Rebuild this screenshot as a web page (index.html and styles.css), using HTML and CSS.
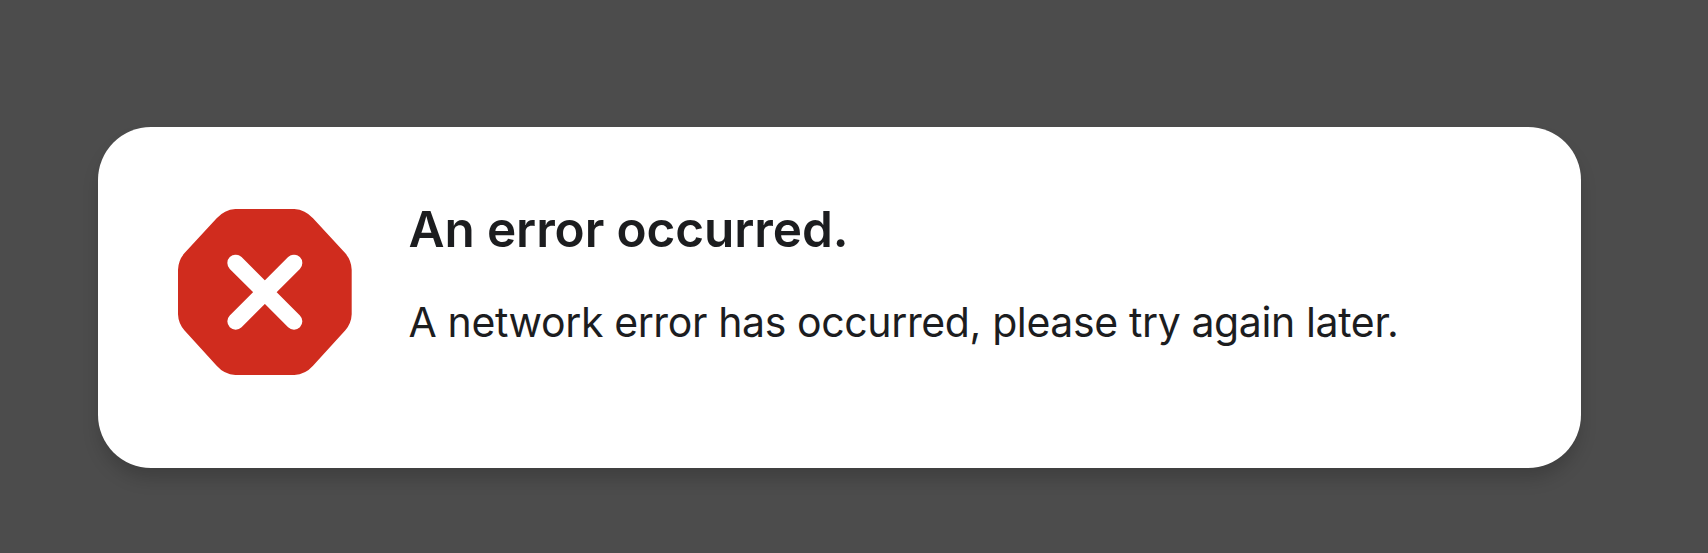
FILE: index.html
```
<!DOCTYPE html>
<html lang="en">
<head>
    <meta charset="UTF-8">
    <title>Error</title>
    <meta name="viewport" content="width=device-width, initial-scale=1">
    <link rel="stylesheet" href="styles.css">
</head>
<body>
    <div class="alert" role="alert">
        <svg class="alert-icon" viewBox="0 0 521 498" preserveAspectRatio="none" aria-hidden="true">
            <path fill="#d02c1e" d="M172 0H349Q382 2 405 28L502 133Q520 154 521 182V316Q520 343 502 364L405 470Q382 496 349 498H172Q139 496 116 470L19 364Q1 343 0 316V182Q1 154 19 133L116 28Q139 2 172 0Z"/>
            <path stroke="#fff" stroke-width="50" stroke-linecap="round" d="M173 162L348 337M348 162L173 337"/>
        </svg>
        <div class="alert-content">
            <h1>An error occurred.</h1>
            <p>A network error has occurred, please try again later.</p>
        </div>
    </div>
</body>
</html>
```

FILE: styles.css
```
* {
    box-sizing: border-box;
}
body {
    margin: 0;
    height: 553px;
    padding: 126.5px 127.5px 0 97.5px;
    overflow: hidden;
    background: #4c4c4c;
    color: #1c1d1f;
    font-family: Inter, "Liberation Sans", sans-serif;
}
.alert {
    display: flex;
    gap: 56.5px;
    height: 341.9px;
    padding: 82px 80.8px;
    background: #fff;
    border-radius: 53px;
    box-shadow: 0 12px 18px -2px rgba(0, 0, 0, 0.18);
}
.alert-icon {
    flex: none;
    width: 173.7px;
    height: 166px;
}
.alert-content {
    white-space: nowrap;
}
h1 {
    margin: -11px 0 36px;
    font-size: 49.5px;
    line-height: 62px;
    font-weight: 600;
    letter-spacing: -0.1px;
}
p {
    margin: 0;
    font-size: 41px;
    line-height: 52px;
    font-weight: 400;
    letter-spacing: -0.38px;
}
```
